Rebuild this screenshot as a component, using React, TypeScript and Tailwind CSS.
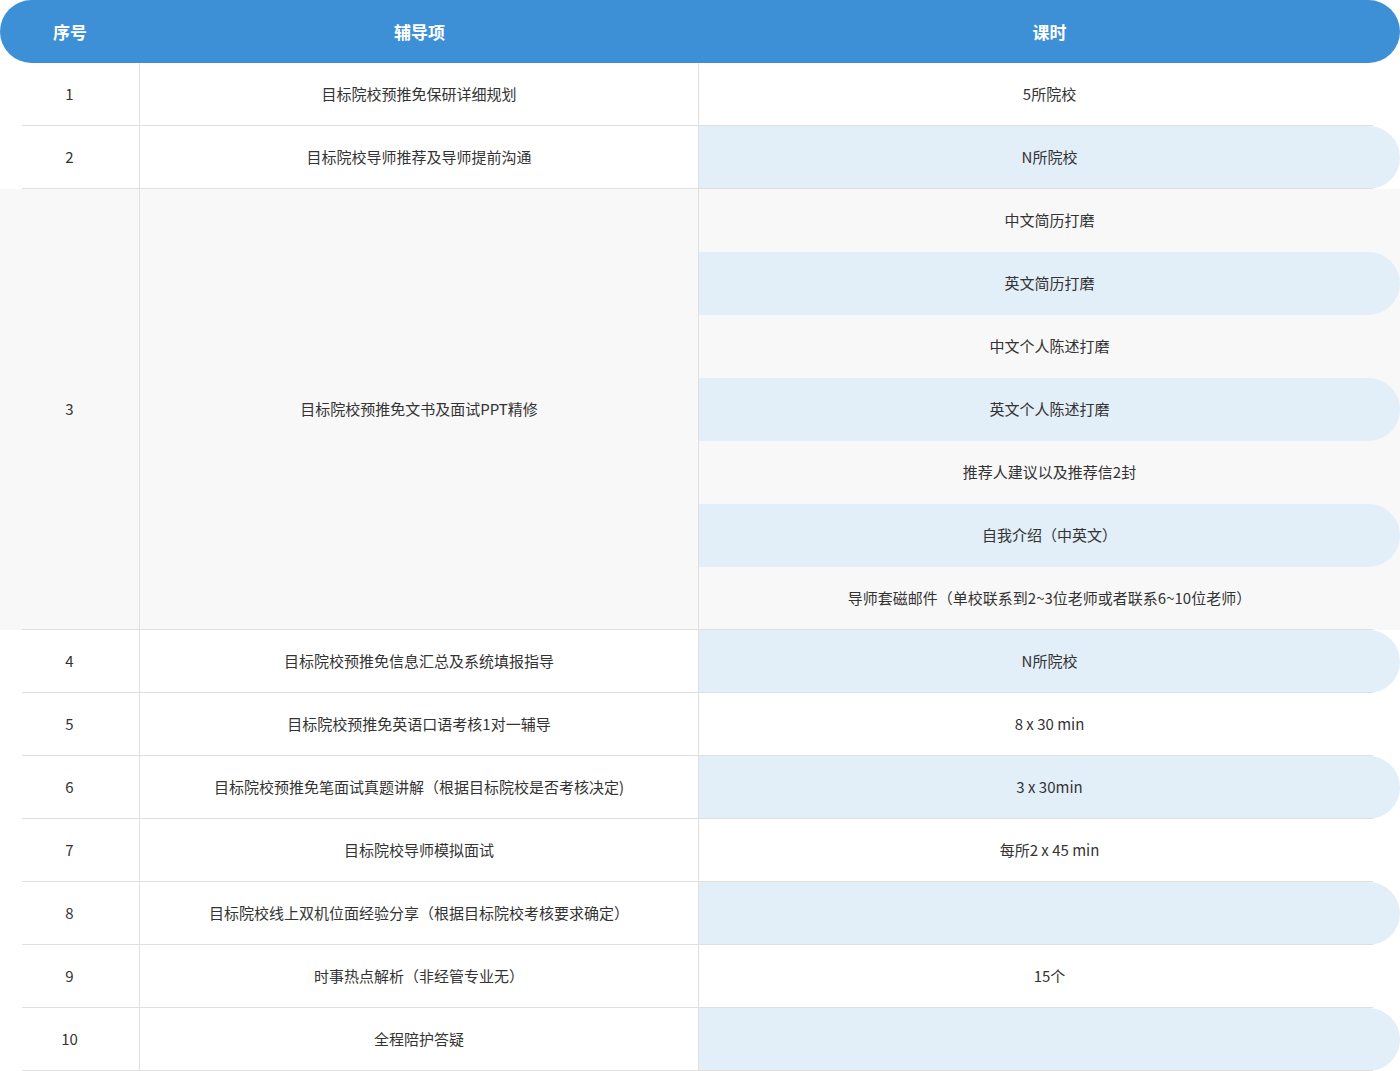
const rows: { n: string; item: string; hours: string[] }[] = [
  { n: "1", item: "目标院校预推免保研详细规划", hours: ["5所院校"] },
  { n: "2", item: "目标院校导师推荐及导师提前沟通", hours: ["N所院校"] },
  {
    n: "3",
    item: "目标院校预推免文书及面试PPT精修",
    hours: ["中文简历打磨", "英文简历打磨", "中文个人陈述打磨", "英文个人陈述打磨", "推荐人建议以及推荐信2封", "自我介绍（中英文）", "导师套磁邮件（单校联系到2~3位老师或者联系6~10位老师）"],
  },
  { n: "4", item: "目标院校预推免信息汇总及系统填报指导", hours: ["N所院校"] },
  { n: "5", item: "目标院校预推免英语口语考核1对一辅导", hours: ["8 x 30 min"] },
  { n: "6", item: "目标院校预推免笔面试真题讲解（根据目标院校是否考核决定)", hours: ["3 x 30min"] },
  { n: "7", item: "目标院校导师模拟面试", hours: ["每所2 x 45 min"] },
  { n: "8", item: "目标院校线上双机位面经验分享（根据目标院校考核要求确定）", hours: [""] },
  { n: "9", item: "时事热点解析（非经管专业无）", hours: ["15个"] },
  { n: "10", item: "全程陪护答疑", hours: [""] },
];

export default function App() {
  let idx = 0;
  return (
    <div className="w-[1400px] bg-white text-[15px] text-[#333]" style={{ fontFamily: '"Noto Sans CJK SC", "Noto Sans", sans-serif' }}>
      <div className="flex h-[63px] items-center rounded-full bg-[#3d8fd6] text-[17px] font-bold text-white">
        <div className="w-[140px] text-center">序号</div>
        <div className="w-[559px] text-center">辅导项</div>
        <div className="flex-1 text-center">课时</div>
      </div>
      {rows.map((r) => {
        const big = r.hours.length > 1;
        return (
          <div key={r.n} className={`relative flex after:absolute after:bottom-0 after:left-[22px] after:right-[27px] after:h-px after:bg-[#e0e0e0] ${big ? "bg-[#f8f8f8]" : ""}`}>
            <div className="flex w-[140px] items-center justify-center border-r border-[#e0e0e0]">{r.n}</div>
            <div className="flex w-[559px] items-center justify-center border-r border-[#e0e0e0]">{r.item}</div>
            <div className="flex flex-1 flex-col">
              {r.hours.map((h, i) => {
                const blue = idx++ % 2 === 1;
                return (
                  <div key={i} className={`flex h-[63px] items-center justify-center rounded-r-[32px] ${blue ? "bg-[#e2eef8]" : ""}`}>
                    {h}
                  </div>
                );
              })}
            </div>
          </div>
        );
      })}
    </div>
  );
}
